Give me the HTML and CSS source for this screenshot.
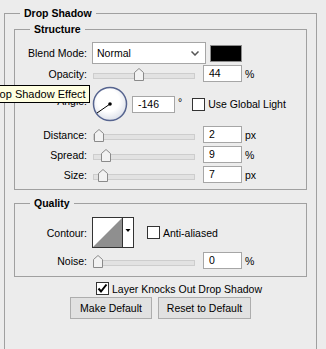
FILE: index.html
```html
<!DOCTYPE html>
<html lang="en">
<head>
  <meta charset="UTF-8" />
  <title>Drop Shadow</title>
  <link rel="stylesheet" href="styles.css">
</head>
<body>

  <div class="tooltip">Drop Shadow Effect</div>

  <fieldset class="group outer">
    <legend>Drop Shadow</legend>

    <fieldset class="group inner structure">
      <legend>Structure</legend>

      <div class="row row-blend">
        <span class="lbl">Blend Mode:</span>
        <div class="select">
          <span>Normal</span>
          <svg width="8" height="5" viewBox="0 0 8 5"><polyline points="0.5,0.5 4,4 7.5,0.5" fill="none" stroke="#555" stroke-width="1.5"/></svg>
        </div>
        <div class="swatch"></div>
      </div>

      <div class="row">
        <span class="lbl">Opacity:</span>
        <div class="slider">
          <svg class="thumb" style="left:41px" width="10" height="13" viewBox="0 0 10 13"><polygon points="0.5,4.5 5,0.5 9.5,4.5 9.5,12.5 0.5,12.5" fill="#f2f2f2" stroke="#8a8a8a"/></svg>
        </div>
        <div class="num">44</div><span class="unit">%</span>
      </div>

      <div class="row row-angle">
        <span class="lbl lbl-angle">Angle:</span>
        <svg class="dial" width="36" height="36" viewBox="0 0 36 36">
          <defs>
            <radialGradient id="dialfill" cx="0.45" cy="0.4" r="0.6">
              <stop offset="0.55" stop-color="#ffffff"/>
              <stop offset="1" stop-color="#dde1ea"/>
            </radialGradient>
          </defs>
          <circle cx="18" cy="18" r="16.5" fill="url(#dialfill)" stroke="#56648f" stroke-width="1.5"/>
          <line x1="18" y1="18" x2="5" y2="27" stroke="#000" stroke-width="1"/>
          <circle cx="18" cy="18" r="1.8" fill="#000"/>
        </svg>
        <div class="num wide">-146</div><span class="deg">°</span>
        <span class="check global"></span><span class="chk-text">Use Global Light</span>
      </div>

      <div class="row row-gap4">
        <span class="lbl">Distance:</span>
        <div class="slider">
          <svg class="thumb" style="left:1px" width="10" height="13" viewBox="0 0 10 13"><polygon points="0.5,4.5 5,0.5 9.5,4.5 9.5,12.5 0.5,12.5" fill="#f2f2f2" stroke="#8a8a8a"/></svg>
        </div>
        <div class="num">2</div><span class="unit">px</span>
      </div>

      <div class="row row-gap3">
        <span class="lbl">Spread:</span>
        <div class="slider">
          <svg class="thumb" style="left:8px" width="10" height="13" viewBox="0 0 10 13"><polygon points="0.5,4.5 5,0.5 9.5,4.5 9.5,12.5 0.5,12.5" fill="#f2f2f2" stroke="#8a8a8a"/></svg>
        </div>
        <div class="num">9</div><span class="unit">%</span>
      </div>

      <div class="row row-gap3">
        <span class="lbl">Size:</span>
        <div class="slider">
          <svg class="thumb" style="left:5px" width="10" height="13" viewBox="0 0 10 13"><polygon points="0.5,4.5 5,0.5 9.5,4.5 9.5,12.5 0.5,12.5" fill="#f2f2f2" stroke="#8a8a8a"/></svg>
        </div>
        <div class="num">7</div><span class="unit">px</span>
      </div>
    </fieldset>

    <fieldset class="group inner quality">
      <legend>Quality</legend>

      <div class="row row-contour">
        <span class="lbl">Contour:</span>
        <svg class="contour" width="42" height="31" viewBox="0 0 42 31">
          <rect x="0.5" y="0.5" width="41" height="30" fill="#fff" stroke="#333"/>
          <polygon points="1,30 30,1 30,30" fill="#8f8f8f"/>
          <line x1="30.5" y1="0.5" x2="30.5" y2="30.5" stroke="#333"/>
          <polygon points="33.5,12 38.5,12 36,15" fill="#000"/>
        </svg>
        <span class="check anti"></span><span class="chk-text">Anti-aliased</span>
      </div>

      <div class="row row-gap4">
        <span class="lbl">Noise:</span>
        <div class="slider">
          <svg class="thumb" style="left:0px" width="10" height="13" viewBox="0 0 10 13"><polygon points="0.5,4.5 5,0.5 9.5,4.5 9.5,12.5 0.5,12.5" fill="#f2f2f2" stroke="#8a8a8a"/></svg>
        </div>
        <div class="num">0</div><span class="unit">%</span>
      </div>
    </fieldset>

    <div class="knock">
      <span class="check">
        <svg width="11" height="11" viewBox="0 0 11 11"><polyline points="1.5,5.5 4,8.5 9.5,1.5" fill="none" stroke="#000" stroke-width="2"/></svg>
      </span>
      <span class="chk-text">Layer Knocks Out Drop Shadow</span>
    </div>

    <div class="buttons">
      <button class="btn make">Make Default</button>
      <button class="btn reset">Reset to Default</button>
    </div>
  </fieldset>

</body>
</html>
```

FILE: styles.css
```css
* {
  box-sizing: border-box;
}
html, body {
  margin: 0;
}
body {
  position: relative;
  width: 326px;
  height: 349px;
  overflow: hidden;
  background-color: #ececec;
  font-family: "Liberation Sans", Arial, sans-serif;
  font-size: 10.5px;
  color: #000;
}

/* group frames */
.group {
  margin: 0;
  padding: 0;
  min-width: 0;
  border: 1px solid #a0a0a0;
}
.group > legend {
  margin-left: 15px;
  padding: 0 4px;
  font-weight: bold;
  line-height: 14px;
}
.outer {
  margin: 6px 0 0 4px;
  width: 313px;
  height: 346px;
}
.inner {
  margin: 0 9px;
}
.structure {
  margin-top: 2px;
  padding-bottom: 6px;
}
.quality {
  margin-top: 6px;
  padding-bottom: 7px;
}

/* rows */
.row {
  display: flex;
  align-items: center;
  height: 17px;
  margin-top: 1px;
}
.row-blend {
  height: 22px;
  margin-top: 6px;
}
.row-angle {
  height: 36px;
  margin-top: 4px;
}
.row-gap4 {
  margin-top: 4px;
}
.row-gap3 {
  margin-top: 3px;
}
.row-contour {
  height: 31px;
  margin-top: 7px;
}
.lbl {
  flex: none;
  width: 72px;
  text-align: right;
}
.lbl-angle {
  margin-top: -6px;
}

/* controls */
.select {
  display: flex;
  align-items: center;
  justify-content: space-between;
  margin-left: 5px;
  width: 114px;
  height: 22px;
  padding: 0 6px 0 4px;
  background-color: #fff;
  border: 1px solid #a6a6a6;
}
.swatch {
  margin-left: 4px;
  width: 32px;
  height: 17px;
  background-color: #000;
  border: 1px solid #8c8c8c;
}
.slider {
  position: relative;
  flex: none;
  margin-left: 6px;
  width: 102px;
  height: 17px;
}
.slider::before {
  content: "";
  position: absolute;
  left: 0;
  right: 0;
  top: 8px;
  height: 4px;
  background-color: #e2e2e2;
  border: 1px solid #cdcdcd;
}
.thumb {
  position: absolute;
  top: 3px;
}
.num {
  flex: none;
  margin-left: 8px;
  width: 39px;
  height: 17px;
  padding-left: 5px;
  line-height: 15px;
  background-color: #fff;
  border: 1px solid #a6a6a6;
}
.unit {
  margin-left: 3px;
}
.dial {
  flex: none;
  margin-left: 5px;
}
.num.wide {
  margin-left: 4px;
  width: 43px;
}
.deg {
  margin-left: 3px;
  margin-top: -4px;
}
.check {
  display: flex;
  align-items: center;
  justify-content: center;
  flex: none;
  width: 13px;
  height: 13px;
  background-color: #fff;
  border: 1px solid #333;
}
.check.global {
  margin-left: 10px;
}
.check.anti {
  margin-left: 13px;
}
.chk-text {
  margin-left: 3px;
}
.contour {
  flex: none;
  margin-left: 5px;
}

/* bottom */
.knock {
  display: flex;
  align-items: center;
  height: 13px;
  margin-top: 5px;
  padding-left: 91px;
}
.buttons {
  display: flex;
  justify-content: center;
  gap: 6px;
  margin-top: 2px;
}
.btn {
  height: 22px;
  padding: 0;
  font-family: inherit;
  font-size: 10.5px;
  color: #000;
  background-color: #e1e1e1;
  border: 1px solid #adadad;
}
.btn.make {
  width: 82px;
}
.btn.reset {
  width: 93px;
}

/* tooltip over the angle label */
.tooltip {
  position: absolute;
  z-index: 2;
  top: 85px;
  left: -16px;
  padding: 1px 3px;
  font-size: 11px;
  line-height: 14px;
  white-space: nowrap;
  background-color: #ffffe1;
  border: 1px solid #000;
}
```
